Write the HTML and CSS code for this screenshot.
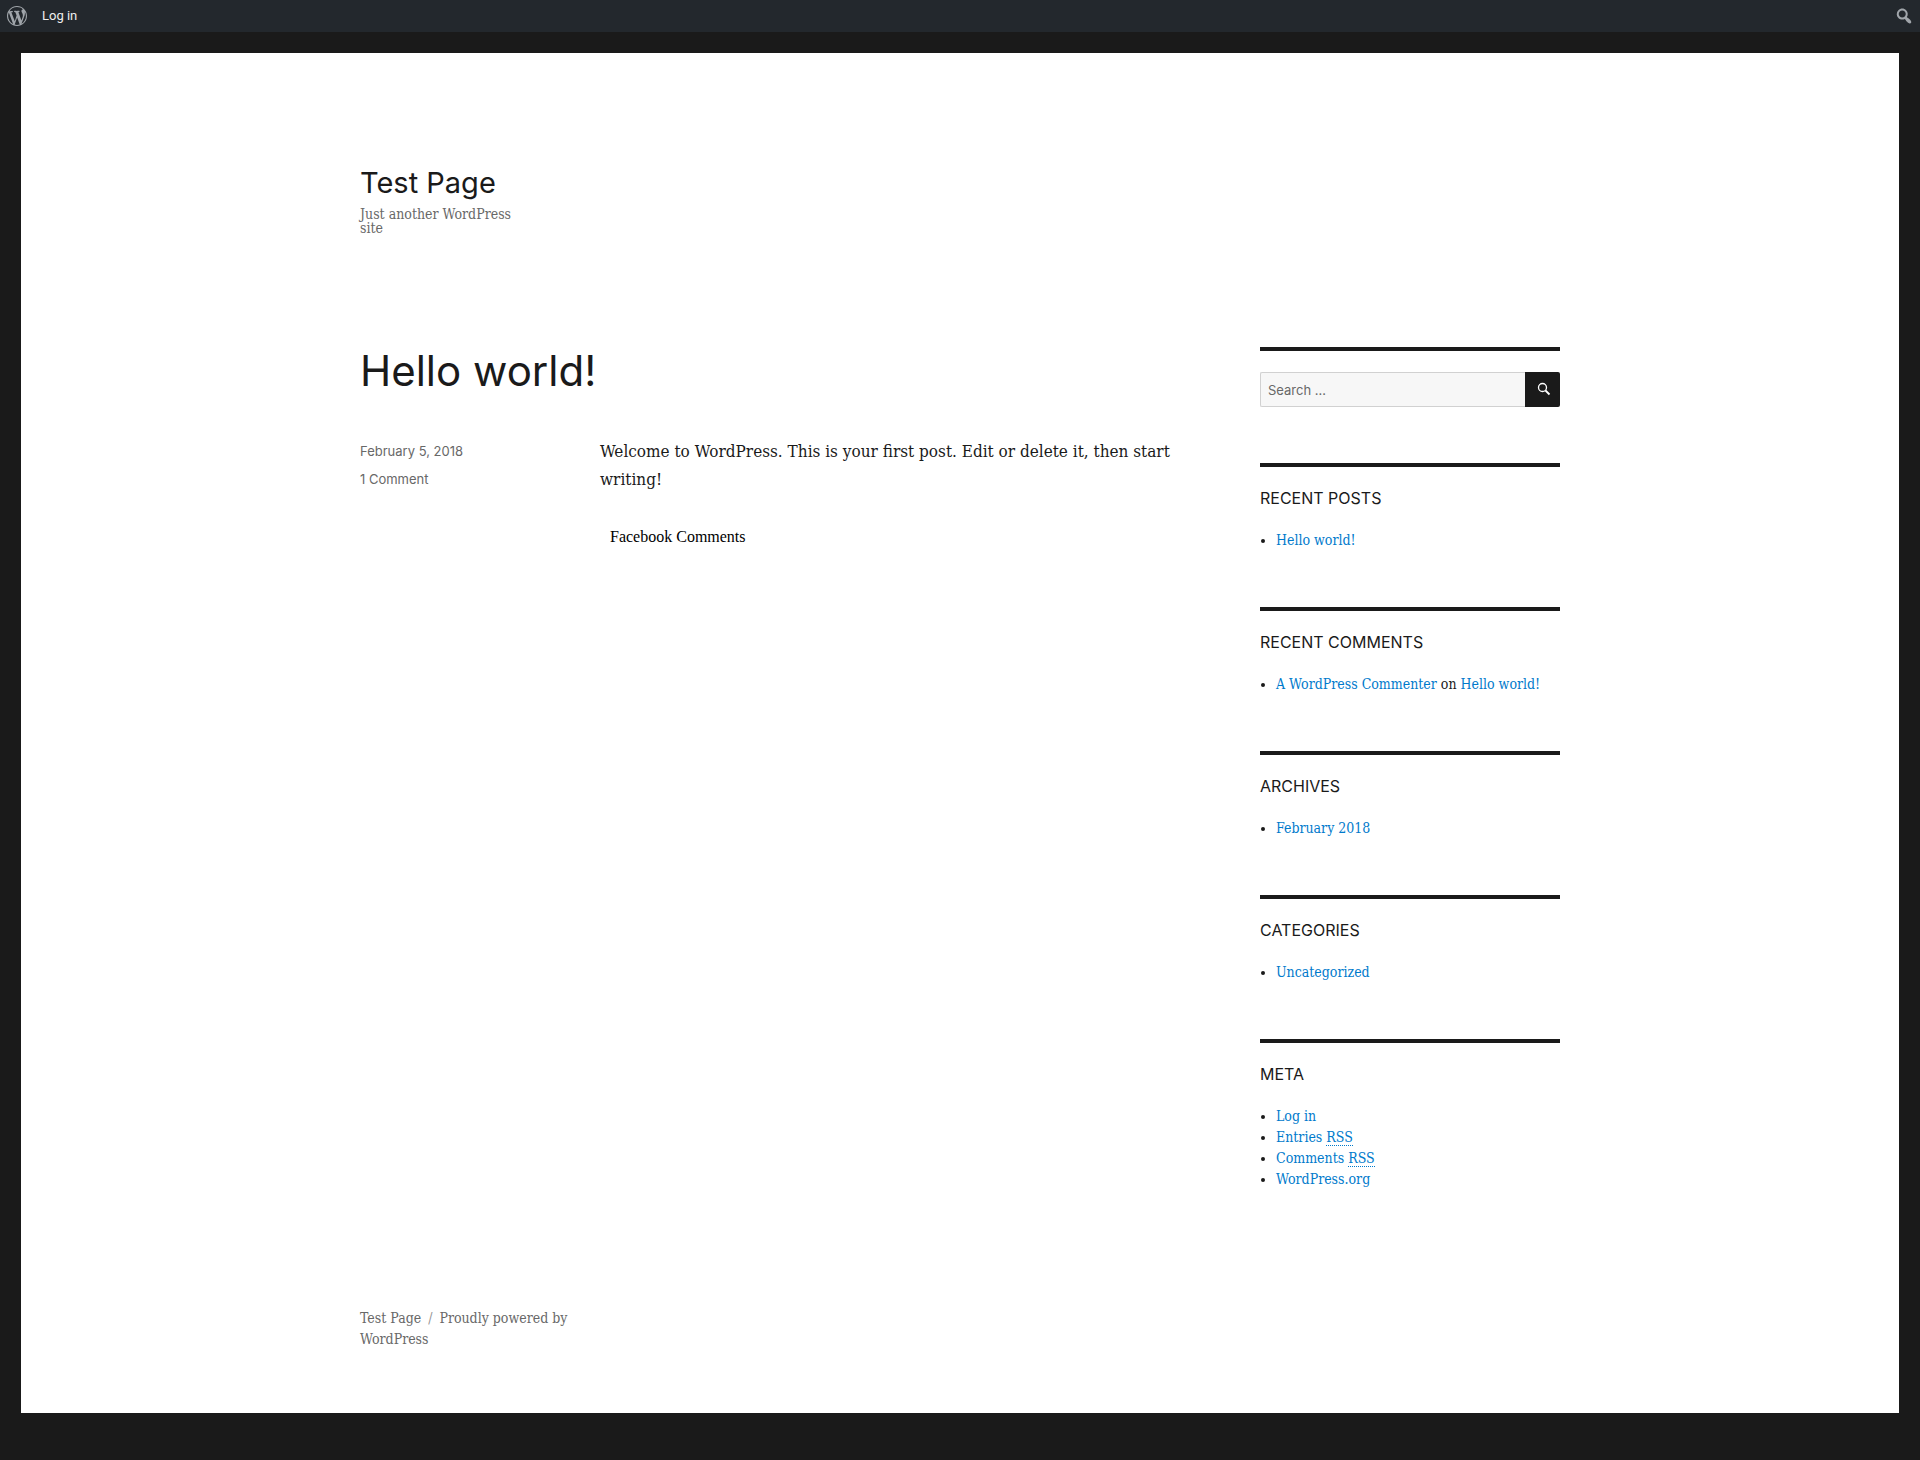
FILE: index.html
```html
<!DOCTYPE html>
<html lang="en">
<head>
<meta charset="utf-8">
<title>Test Page</title>
<meta name="viewport" content="width=device-width, initial-scale=1">
<link rel="stylesheet" href="styles.css">
</head>
<body>
<nav class="admin-bar" aria-label="Toolbar">
  <a class="admin-link" href="#" aria-label="About WordPress">
    <svg width="20" height="20" viewBox="0 0 20 20" fill="currentColor" aria-hidden="true"><path d="M20 10c0-5.51-4.49-10-10-10C4.48 0 0 4.49 0 10c0 5.52 4.48 10 10 10 5.51 0 10-4.48 10-10zM7.78 15.37L4.37 6.22c.55-.02 1.17-.08 1.17-.08.5-.06.44-1.13-.06-1.11 0 0-1.45.11-2.37.11-.18 0-.37 0-.58-.01C4.12 2.69 6.87 1.11 10 1.11c2.33 0 4.45.87 6.05 2.34-.68-.11-1.65.39-1.65 1.58 0 .74.45 1.36.9 2.1.35.61.55 1.36.55 2.46 0 1.49-1.4 5-1.4 5l-3.03-8.37c.54-.02.82-.17.82-.17.5-.05.44-1.25-.06-1.22 0 0-1.44.12-2.38.12-.87 0-2.33-.12-2.33-.12-.5-.03-.56 1.2-.06 1.22l.92.08 1.26 3.41zM17.41 10c.24-.64.74-1.87.43-4.25.7 1.29 1.05 2.71 1.05 4.25 0 3.29-1.73 6.24-4.4 7.78.97-2.59 1.94-5.2 2.92-7.78zM6.1 18.09C3.12 16.65 1.11 13.53 1.11 10c0-1.3.23-2.48.72-3.59C3.25 10.3 4.67 14.2 6.1 18.09zm4.03-6.63l2.58 6.98c-.86.29-1.76.45-2.71.45-.79 0-1.57-.11-2.29-.33.81-2.38 1.62-4.74 2.42-7.1z"/></svg>
  </a>
  <a class="admin-link admin-login" href="#">Log in</a>
  <a class="admin-link admin-search" href="#" aria-label="Search">
    <svg width="20" height="20" viewBox="0 0 20 20" fill="currentColor" aria-hidden="true"><path d="M12.14 4.18c1.87 1.87 2.11 4.75.72 6.89.12.1.22.21.36.31.2.16.47.36.81.59.34.24.56.39.66.47.42.31.73.57.94.78.32.32.6.65.84 1 .25.35.44.69.59 1.04.14.35.21.68.18 1-.02.32-.14.59-.36.81s-.49.34-.81.36c-.31.02-.65-.04-.99-.19-.35-.14-.7-.34-1.04-.59-.35-.24-.68-.52-1-.84-.21-.21-.47-.52-.77-.93-.1-.13-.25-.35-.47-.66-.22-.32-.4-.57-.56-.78-.16-.2-.29-.35-.44-.5-2.07 1.09-4.69.76-6.44-.98-2.14-2.15-2.14-5.64 0-7.78 2.15-2.15 5.63-2.15 7.78 0zm-1.41 6.36c1.36-1.37 1.36-3.58 0-4.95-1.37-1.37-3.59-1.37-4.95 0-1.37 1.37-1.37 3.58 0 4.95 1.36 1.37 3.58 1.37 4.95 0z"/></svg>
  </a>
</nav>

<div class="site">
  <div class="site-inner">
    <header class="site-header">
      <p class="site-title"><a href="#">Test Page</a></p>
      <p class="site-description">Just another WordPress site</p>
    </header>

    <div class="site-content">
      <main class="main">
        <article>
          <h1 class="entry-title">Hello world!</h1>
          <div class="entry-body">
            <footer class="entry-meta">
              <a href="#">February 5, 2018</a>
              <a href="#">1 Comment</a>
            </footer>
            <div class="entry-content">
              <p>Welcome to WordPress. This is your first post. Edit or delete it, then start writing!</p>
              <p class="comments-label">Facebook Comments</p>
            </div>
          </div>
        </article>
      </main>

      <aside class="sidebar">
        <section class="widget">
          <form class="search-form" role="search">
            <input class="search-field" type="search" placeholder="Search …" aria-label="Search for:">
            <button class="search-submit" type="button" aria-label="Search">
              <svg width="17" height="17" viewBox="0 0 17 17" fill="none" stroke="currentColor" aria-hidden="true"><circle cx="8.500" cy="6.500" r="4" stroke-width="1.300"/><path d="M11.500 9.500l4 4" stroke-width="1.800"/></svg>
            </button>
          </form>
        </section>
        <section class="widget">
          <h2>Recent Posts</h2>
          <ul><li><a href="#">Hello world!</a></li></ul>
        </section>
        <section class="widget">
          <h2>Recent Comments</h2>
          <ul><li><a href="#">A WordPress Commenter</a> on <a href="#">Hello world!</a></li></ul>
        </section>
        <section class="widget">
          <h2>Archives</h2>
          <ul><li><a href="#">February 2018</a></li></ul>
        </section>
        <section class="widget">
          <h2>Categories</h2>
          <ul><li><a href="#">Uncategorized</a></li></ul>
        </section>
        <section class="widget">
          <h2>Meta</h2>
          <ul>
            <li><a href="#">Log in</a></li>
            <li><a href="#">Entries <abbr>RSS</abbr></a></li>
            <li><a href="#">Comments <abbr>RSS</abbr></a></li>
            <li><a href="#">WordPress.org</a></li>
          </ul>
        </section>
      </aside>
    </div>

    <footer class="site-footer">
      <a href="#">Test Page</a><span class="separator">/</span><a href="#">Proudly powered by WordPress</a>
    </footer>
  </div>
</div>
</body>
</html>
```
FILE: styles.css
```css
*, *::before, *::after {
  box-sizing: border-box;
}

body {
  margin: 0;
  background: #1a1a1a;
  color: #1a1a1a;
  font: 17px/28px "DejaVu Serif Condensed", "DejaVu Serif", serif;
}

h1, h2, p, ul {
  margin: 0;
  padding: 0;
}

a {
  color: #007acc;
  text-decoration: none;
}

svg {
  display: block;
}

/* Toolbar */
.admin-bar {
  display: flex;
  align-items: center;
  height: 32px;
  background: #23282d;
}

.admin-link {
  padding: 0 7px;
  color: #a0a5aa;
}

.admin-login {
  padding: 0 8px;
  color: #eee;
  font: 400 13px/32px Roboto, sans-serif;
}

.admin-search {
  margin-left: auto;
  padding: 0 6px;
}

/* Page frame */
.site {
  margin: 21px 21px 46px;
  background: #fff;
}

.site-inner {
  max-width: 1200px;
  margin: 0 auto;
}

.site-header {
  padding: 112px 0;
}

.site-title {
  font: 400 29px/35px Inter, sans-serif;
}

.site-title a {
  color: #1a1a1a;
}

.site-description {
  max-width: 168px;
  margin-top: 7px;
  color: #686868;
  font-size: 14px;
  line-height: 14px;
}

.site-content {
  display: grid;
  grid-template-columns: 70% 25%;
  justify-content: space-between;
}

/* Post */
.entry-title {
  margin-bottom: 42px;
  font: 400 42px/48px Inter, sans-serif;
}

.entry-body {
  display: grid;
  grid-template-columns: 2fr 5fr;
}

.entry-meta {
  display: flex;
  flex-direction: column;
  font: 400 13px/28px Inter, sans-serif;
}

.entry-meta a {
  color: #686868;
}

.entry-content {
  padding-right: 14px;
}

.comments-label {
  padding: 30px 10px;
  color: #000;
  font: 16px/28px "Liberation Serif", serif;
}

/* Sidebar */
.widget {
  padding: 21px 0 56px;
  border-top: 4px solid #1a1a1a;
  font-size: 14px;
  line-height: 21px;
}

.widget h2 {
  margin-bottom: 21px;
  font: 400 16px/21px Inter, sans-serif;
  text-transform: uppercase;
}

.widget ul {
  padding-left: 16px;
}

.widget abbr {
  border-bottom: 1px dotted #007acc;
}

.search-form {
  display: flex;
}

.search-field {
  flex: 1;
  min-width: 0;
  height: 35px;
  padding: 0 7px;
  border: 1px solid #d1d1d1;
  border-right-width: 0;
  border-radius: 2px 0 0 2px;
  background: #f7f7f7;
  color: #686868;
  font: 400 13px/18px Inter, sans-serif;
}

.search-field::placeholder {
  color: #686868;
}

.search-submit {
  display: grid;
  place-items: center;
  width: 35px;
  height: 35px;
  padding: 0;
  border: 0;
  border-radius: 0 2px 2px 0;
  background: #1a1a1a;
  color: #fff;
}

/* Footer */
.site-footer {
  max-width: 240px;
  padding: 62px 0 63px;
  color: #686868;
  font-size: 14px;
  line-height: 21px;
}

.site-footer a {
  color: #686868;
}

.separator {
  margin: 0 7px;
  opacity: 0.7;
}
```
